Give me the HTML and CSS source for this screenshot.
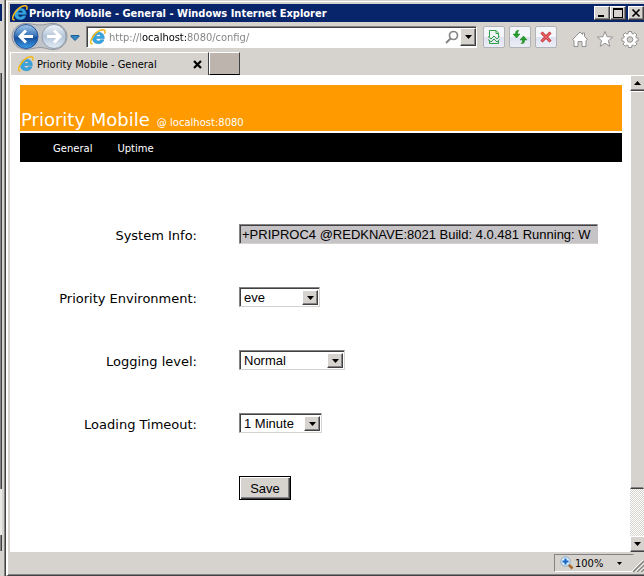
FILE: index.html
```html
<!DOCTYPE html>
<html lang="en">
<head>
<meta charset="utf-8">
<title>Priority Mobile - General</title>
<link rel="stylesheet" href="styles.css">
</head>
<body>
<svg class="defs" aria-hidden="true">
  <symbol id="ie" viewBox="0 0 16 16">
    <path d="M14.3 9.6H6c.1 1.6 1 2.4 2.400 2.400 1 0 1.700-.4 2.200-1.200h3.300c-.8 2.600-2.800 4-5.600 4-3.500 0-5.900-2.300-5.900-5.700 0-3.300 2.500-5.800 6-5.800 3.700 0 6 2.400 5.900 6.300zM6.100 7.500h4.700c-.2-1.200-1-2-2.300-2s-2.200.8-2.400 2z" fill="#36a5e0" stroke="#2380bd" stroke-width=".5"/>
    <path d="M2.700 14.600C.2 15.500.2 12.500 1.900 9.300 4.300 4.600 9.500.6 13 .7c2.300.1 2.400 2 1.500 4" fill="none" stroke="#f5b91e" stroke-width="1.500"/>
  </symbol>
  <symbol id="down" viewBox="0 0 7 4"><path d="M0 0h7L3.500 4z" fill="#000"/></symbol>
  <symbol id="up" viewBox="0 0 7 4"><path d="M0 4h7L3.500 0z" fill="#000"/></symbol>
</svg>
<div class="desktop">
  <div class="behind"><div class="behind-title"></div><div class="behind-body"></div><div class="behind-track"></div><div class="behind-foot"></div></div>
  <div class="window">
    <header class="titlebar">
      <svg class="ie"><use href="#ie"/></svg>
      <span class="caption">Priority Mobile - General - Windows Internet Explorer</span>
      <button class="win-btn" aria-label="Minimize"><svg viewBox="0 0 12 10"><path d="M2 7h6v2H2z"/></svg></button>
      <button class="win-btn" aria-label="Maximize"><svg viewBox="0 0 12 10"><path d="M1 0h10v10H1zM2 2v7h8V2z" fill-rule="evenodd"/></svg></button>
      <button class="win-btn close" aria-label="Close"><svg viewBox="0 0 12 10"><path d="M2.500 1.500l7 7M9.500 1.500l-7 7" stroke="#000" stroke-width="1.700"/></svg></button>
    </header>

    <div class="toolbar">
      <svg class="nav" viewBox="0 0 74 30" role="img" aria-label="Back and forward">
        <defs>
          <linearGradient id="b" x1="0" y1="0" x2="0" y2="1"><stop offset="0" stop-color="#a5c8ea"/><stop offset=".45" stop-color="#3b78bd"/><stop offset=".55" stop-color="#164f9d"/><stop offset="1" stop-color="#3e9ee8"/></linearGradient>
          <linearGradient id="f" x1="0" y1="0" x2="0" y2="1"><stop offset="0" stop-color="#f2f6fa"/><stop offset=".5" stop-color="#b4c5d9"/><stop offset="1" stop-color="#e3ecf5"/></linearGradient>
        </defs>
        <path d="M15 1.500C20 1.500 24 3 29 3S37 1.500 42 1.500c8 0 14 6 14 13s-6 13-14 13c-5 0-8-2-13-2s-9 2-14 2c-8 0-14-6-14-13s6-13 14-13z" fill="#c0c4c9" stroke="#91979f"/>
        <circle cx="15" cy="14.500" r="12" fill="url(#b)" stroke="#29579a"/>
        <circle cx="43" cy="14.500" r="12" fill="url(#f)" stroke="#929eac"/>
        <path d="M22 14.500H9M15 8.500l-6 6 6 6" fill="none" stroke="#fff" stroke-width="3"/>
        <path d="M36 14.500h13M43 8.500l6 6-6 6" fill="none" stroke="#fff" stroke-width="3"/>
        <path d="M60 13.500h8v1l-4 4-4-4z" fill="#3389c8" stroke="#1d5c92"/>
      </svg>
      <div class="address">
        <svg class="ie"><use href="#ie"/></svg>
        <input class="url" type="text" value="http://localhost:8080/config/" aria-label="Address">
        <svg class="lens" viewBox="0 0 14 14"><circle cx="8.500" cy="5.500" r="4" fill="none" stroke="#858585" stroke-width="1.700"/><path d="M5.500 8.500l-4.500 4.500" stroke="#858585" stroke-width="2"/></svg>
        <button class="drop" aria-label="Show address list"><svg class="arrow"><use href="#down"/></svg></button>
      </div>
      <button class="tool" aria-label="Compatibility view"><svg viewBox="0 0 16 16"><path d="M3.500 8V1.500H10L12.500 4v4M10 1.500V4.500h2.500M3.500 11v3.500h9V11M2 7.500l3 2.500 3-3 3 3 2.500-2.500M2 10.500l3 2.500 3-3 3 3 2.500-2.500" fill="none" stroke="#35a047"/></svg></button>
      <button class="tool" aria-label="Refresh"><svg viewBox="0 0 16 16"><path d="M7 1.500H5.500Q3.500 1.500 3.500 4v1H1l3.500 4L8 5H5.500V4q0-1.500 1.500-2.500zM9 14.500h1.500q2 0 2-2.500v-1H15l-3.500-4L8 11h2.500v1q0 1.500-1.500 2.500z" fill="#269b29" stroke="#12801b" stroke-width=".5"/></svg></button>
      <button class="tool" aria-label="Stop"><svg viewBox="0 0 16 16"><path d="M3.500 3.500l9 9M12.500 3.500l-9 9" stroke="#bd3036" stroke-width="3"/><path d="M3.500 3.500l9 9M12.500 3.500l-9 9" stroke="#ee676b" stroke-width="1.200"/></svg></button>
      <div class="links">
        <button aria-label="Home"><svg viewBox="0 0 18 18"><path d="M1.500 9.500L9 2l2.500 2.500V3h2v3.500l3 3-1.500 1v6h-4v-5H7v5H3v-6z" fill="#fff" stroke="#919191"/></svg></button>
        <button aria-label="Favorites"><svg viewBox="0 0 18 18"><path d="M9 1.500l2.100 5.200 5.600.4-4.300 3.600 1.400 5.600L9 13.200l-4.800 3.100 1.400-5.600-4.300-3.600 5.600-.4z" fill="#fff" stroke="#919191"/></svg></button>
        <button aria-label="Tools"><svg viewBox="0 0 18 18"><path d="M7.500 1.500h3l.4 2 1.200.5 1.700-1.200 2.100 2.100-1.200 1.700.5 1.200 2 .4v2.600l-2 .4-.5 1.200 1.200 1.700-2.100 2.100-1.700-1.200-1.200.5-.4 2h-3l-.4-2-1.200-.5-1.700 1.200-2.100-2.100 1.200-1.700-.5-1.200-2-.4V8.200l2-.4.500-1.200-1.200-1.700 2.100-2.100L5.900 4l1.200-.5z" fill="#fff" stroke="#919191"/><circle cx="9" cy="9.500" r="2.800" fill="#d6d3ce" stroke="#919191"/></svg></button>
      </div>
    </div>

    <nav class="tabs">
      <div class="tab">
        <svg class="ie"><use href="#ie"/></svg>
        <span class="tab-name">Priority Mobile - General</span>
        <button class="tab-close" aria-label="Close tab"><svg viewBox="0 0 9 9"><path d="M1 1l7 7M8 1L1 8" stroke="#000" stroke-width="2.200"/></svg></button>
      </div>
      <button class="new-tab" aria-label="New tab"></button>
    </nav>

    <div class="view">
      <main class="page">
        <h1 class="banner">Priority Mobile <small>@ localhost:8080</small></h1>
        <nav class="menu"><a href="#general">General</a><a href="#uptime">Uptime</a></nav>
        <form class="settings">
          <label for="info">System Info:</label>
          <div><input class="info" id="info" type="text" readonly value="+PRIPROC4 @REDKNAVE:8021 Build: 4.0.481 Running: W"></div>
          <label for="env">Priority Environment:</label>
          <div><span class="pick env"><select id="env"><option>eve</option></select><span class="pick-btn"><svg class="arrow"><use href="#down"/></svg></span></span></div>
          <label for="log">Logging level:</label>
          <div><span class="pick log"><select id="log"><option>Normal</option></select><span class="pick-btn"><svg class="arrow"><use href="#down"/></svg></span></span></div>
          <label for="timeout">Loading Timeout:</label>
          <div><span class="pick timeout"><select id="timeout"><option>1 Minute</option></select><span class="pick-btn"><svg class="arrow"><use href="#down"/></svg></span></span></div>
          <button class="save" type="button">Save</button>
        </form>
      </main>
      <div class="scrollbar">
        <button aria-label="Scroll up"><svg class="arrow"><use href="#up"/></svg></button>
        <div class="thumb"></div>
        <div class="track"></div>
        <button aria-label="Scroll down"><svg class="arrow"><use href="#down"/></svg></button>
      </div>
    </div>

    <footer class="status">
      <button class="zoom">
        <svg class="zoom-icon" viewBox="0 0 14 14"><path d="M8.500 8.500l4 4" stroke="#a8672f" stroke-width="2.500"/><circle cx="5.500" cy="5.500" r="4.700" fill="#d9efff" stroke="#8aa6c0"/><path d="M5.500 2.500v6M2.500 5.500h6" stroke="#1765c5" stroke-width="2"/></svg>
        <span>100%</span>
        <svg class="zoom-arrow"><use href="#down"/></svg>
      </button>
      <svg class="grip" viewBox="0 0 12 12"><path d="M1 12L12 1M5 12l7-7M9 12l3-3" stroke="#84827e" stroke-width="1.500"/><path d="M0 11L11 0M3.500 12L12 3.500M7.500 12L12 7.500" stroke="#fff"/></svg>
    </footer>
  </div>
</div>
</body>
</html>
```
FILE: styles.css
```css
* { box-sizing: border-box; }
body {
  margin: 0;
  background: #d6d3ce;
  color: #000;
  font-family: "DejaVu Sans Condensed", "DejaVu Sans", sans-serif;
  font-size: 11px;
}
button { padding: 0; margin: 0; font: inherit; color: inherit; border-radius: 0; }
svg { display: block; flex: none; }
.defs { display: none; }
.ie { width: 16px; height: 16px; }
.arrow { width: 7px; height: 4px; }

.desktop { display: flex; height: 100vh; overflow: hidden; }
.behind {
  flex: none;
  display: flex;
  flex-direction: column;
  width: 6px;
  padding: 4px 3px 0 0;
  border-right: 1px solid #42413f;
  background: #d6d3ce;
  box-shadow: inset -1px 0 #848284;
}
.behind-title { height: 17px; width: 2px; background: #08246b; }
.behind-body { flex: 1; width: 2px; margin-top: 52px; background: #848284; border-right: 1px solid #424142; }
.behind-track { height: 46px; width: 2px; background: #ebe9e6; }
.behind-foot { height: 16px; width: 2px; margin-bottom: 25px; background: #848284; border-right: 1px solid #424142; }

.window {
  flex: 1;
  min-width: 0;
  display: flex;
  flex-direction: column;
  padding-left: 2px;
  border-left: 2px solid #fff;
  border-top: 1px solid #d6d3ce;
  border-bottom: 1px solid #424142;
  box-shadow: inset 0 1px #fff, inset 0 -1px #848284;
}

.titlebar {
  flex: none;
  display: flex;
  align-items: center;
  height: 18px;
  margin-top: 3px;
  padding-left: 2px;
  background: #08246b;
  color: #fff;
  font-weight: bold;
}
.caption { flex: 1; white-space: nowrap; padding-left: 1px; }
.win-btn {
  display: flex;
  align-items: center;
  justify-content: center;
  width: 16px;
  height: 14px;
  background: #d6d3ce;
  border: 1px solid;
  border-color: #fff #424142 #424142 #fff;
  box-shadow: inset -1px -1px #848284;
}
.win-btn svg { width: 12px; height: 10px; }
.win-btn.close { margin-left: 2px; }

.toolbar {
  flex: none;
  display: flex;
  align-items: center;
  height: 30px;
}
.nav { width: 74px; height: 30px; margin: 0 1px; }
.address {
  flex: 1;
  min-width: 0;
  display: flex;
  align-items: center;
  height: 22px;
  padding-left: 3px;
  background: #fff;
  border: 1px solid;
  border-color: #848284 #fff #fff #848284;
  box-shadow: inset 1px 1px #424142;
}
.url {
  flex: 1;
  min-width: 0;
  padding: 0;
  margin-left: 3px;
  border: 0;
  font: 11px "DejaVu Sans Condensed", "DejaVu Sans", sans-serif;
  color: transparent;
  background: linear-gradient(90deg, #808080 33px, #000 33px 77px, #808080 77px);
  -webkit-background-clip: text;
  background-clip: text;
}
.lens { width: 14px; height: 14px; margin-right: 1px; }
.drop, .pick-btn, .scrollbar button {
  display: flex;
  align-items: center;
  justify-content: center;
  background: #d6d3ce;
  border: 1px solid;
  border-color: #fff #424142 #424142 #fff;
  box-shadow: inset -1px -1px #848284;
}
.drop { width: 16px; height: 18px; }
.tool {
  display: flex;
  align-items: center;
  justify-content: center;
  width: 22px;
  height: 22px;
  margin-left: 4px;
  border: 1px solid #b1b3b8;
  border-radius: 2px;
  background: linear-gradient(#f5f6fa 50%, #dfe2ef 50%, #eceef7);
}
.tool svg { width: 16px; height: 16px; }
.tool + .links { margin: 4px 5px 0 14px; }
.address + .tool { margin-left: 6px; }
.links { display: flex; gap: 7px; }
.links button { border: 0; background: none; }
.links svg { width: 18px; height: 18px; }

.tabs { flex: none; display: flex; height: 23px; }
.tab {
  display: flex;
  align-items: center;
  width: 199px;
  padding-left: 7px;
  border-top: 1px solid #fff;
  border-left: 1px solid #fff;
  border-right: 1px solid #424142;
}
.tab-name { flex: 1; padding-left: 3px; white-space: nowrap; }
.tab-close { border: 0; background: none; margin-right: 6px; }
.tab-close svg { width: 9px; height: 9px; }
.new-tab {
  width: 31px;
  background: #bdb5ad;
  border: 1px solid;
  border-color: #fff #424142 #000 #fff;
}

.view { flex: 1; min-height: 0; display: flex; background: #fff; }
.page {
  flex: 1;
  min-width: 0;
  padding: 10px 8px 0 10px;
  font-family: "DejaVu Sans", sans-serif;
  overflow: hidden;
}
.banner {
  display: flex;
  align-items: baseline;
  gap: 7px;
  margin: 0 0 2px;
  height: 46px;
  padding: 24px 1px 0;
  background: #ff9a00;
  color: #fff;
  font-size: 18px;
  line-height: 22px;
  font-weight: normal;
}
.banner small { font-size: 10px; }
.menu {
  display: flex;
  gap: 25px;
  padding: 2px 0 0 33px;
  background: #000;
  font-size: 10px;
  line-height: 27px;
}
.menu a { color: #fff; text-decoration: none; }
.settings {
  display: grid;
  grid-template-columns: 177px minmax(0, 1fr);
  column-gap: 42px;
  grid-auto-rows: 22px;
  row-gap: 41px;
  align-items: start;
  padding: 62px 24px 0 0;
  font-size: 13px;
}
.settings label { text-align: right; white-space: nowrap; line-height: 24px; }
.info, .pick select, .save { font: 13px "Liberation Sans", Arial, sans-serif; color: #000; }
.info {
  display: block;
  width: 100%;
  height: 20px;
  padding: 0 0 0 2px;
  border: 1px solid;
  border-color: #848284 #c6c3c6 #d6d3ce #848284;
  border-radius: 0;
  box-shadow: inset 1px 1px #424142;
  background: #c6c3c6;
}
.pick {
  display: flex;
  height: 20px;
  padding: 2px 1px 1px 2px;
  background: #fff;
  border: 1px solid;
  border-color: #848284 #d6d3ce #d6d3ce #848284;
  box-shadow: inset 1px 1px #424142;
}
.env { width: 81px; }
.log { width: 106px; }
.timeout { width: 83px; }
.pick select {
  flex: 1;
  min-width: 0;
  padding: 0 0 0 2px;
  border: 0;
  appearance: none;
  background: none;
}
.pick-btn { flex: none; width: 16px; pointer-events: none; }
.save {
  grid-column: 2;
  justify-self: start;
  width: 52px;
  height: 24px;
  border: 1px solid #000;
  background: #d6d3ce;
  box-shadow: inset 1px 1px #fff, inset -1px -1px #424142, inset -2px -2px #848284;
}

.scrollbar { flex: none; display: flex; flex-direction: column; width: 14px; overflow: hidden; }
.scrollbar button { flex: none; height: 16px; width: 100%; border-right: 0; box-shadow: inset 0 -1px #848284; }
.thumb {
  flex: 398;
  background: #d6d3ce;
  border: 1px solid;
  border-color: #fff transparent #424142 #fff;
  box-shadow: inset 0 -1px #848284;
}
.track { flex: 47; background: repeating-conic-gradient(#fff 0 25%, #d6d3ce 0 50%) 0 0 / 2px 2px; }

.status { flex: none; display: flex; justify-content: flex-end; height: 23px; padding: 2px 0 3px; }
.zoom {
  display: flex;
  align-items: center;
  width: 80px;
  padding-left: 5px;
  background: none;
  border: 1px solid;
  border-color: #848284 transparent #fff #848284;
}
.zoom-icon { width: 14px; height: 14px; margin-right: 1px; }
.zoom-arrow { width: 5px; height: 3px; margin-left: 14px; }
.grip { width: 12px; height: 12px; align-self: flex-end; margin-left: -2px; }
```
